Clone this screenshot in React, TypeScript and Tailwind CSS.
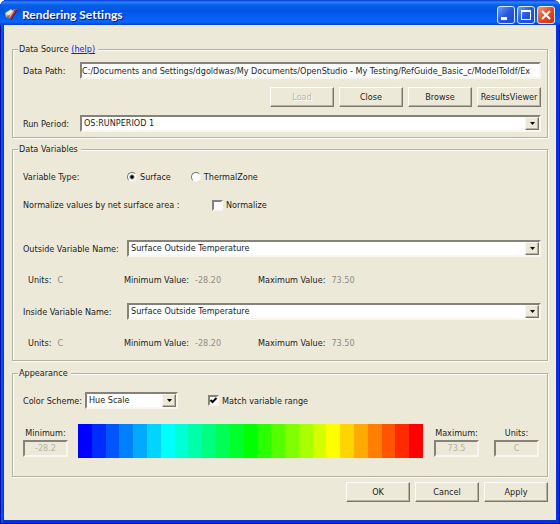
import type { ReactNode } from 'react';

const sunken =
  'border-2 border-t-[#85827a] border-l-[#85827a] border-r-[#f8f6ee] border-b-[#f8f6ee]';
const bands = Array.from({ length: 25 }, (_, i) => `hsl(${240 - i * 10} 100% 50%)`);

function Group({ title, className, children }: { title: ReactNode; className: string; children: ReactNode }) {
  return (
    <fieldset
      className={`min-w-0 border border-[#b5b2a5] pl-[10px] shadow-[1px_1px_0_#fffef8,inset_1px_1px_0_#fffef8] ${className}`}
    >
      <legend className="-ml-[5px] h-[14px] bg-[#ece9d8] px-px pr-[3px]">{title}</legend>
      {children}
    </fieldset>
  );
}

function PushButton({ children, disabled }: { children: ReactNode; disabled?: boolean }) {
  return (
    <button
      type="button"
      disabled={disabled}
      className="h-5 w-16 border border-t-[#fffef8] border-l-[#fffef8] border-r-[#79766b] border-b-[#79766b] bg-[#ece9d8] text-center leading-4 whitespace-nowrap shadow-[inset_-1px_-1px_0_#b5b2a3] disabled:text-[#b8b5a6] disabled:[text-shadow:1px_1px_0_#fff]"
    >
      {children}
    </button>
  );
}

function Dropdown({ id, value, className }: { id: string; value: string; className: string }) {
  return (
    <div className={`relative h-[17px] bg-white ${sunken} ${className}`}>
      <select id={id} className="block h-[13px] w-full appearance-none bg-white pl-[2px] leading-[13px] outline-none">
        <option>{value}</option>
      </select>
      <span className="pointer-events-none absolute top-0 right-0 flex h-[13px] w-[14px] items-center justify-center border border-t-[#f8f6ee] border-l-[#f8f6ee] border-r-[#79766b] border-b-[#79766b] bg-[#ece9d8] shadow-[inset_-1px_-1px_0_#b5b2a3]">
        <svg width="5" height="3" viewBox="0 0 5 3" aria-hidden="true">
          <path d="M0 0h5L2.500 3z" fill="#000" />
        </svg>
      </span>
    </div>
  );
}

function Radio({ label, checked }: { label: string; checked?: boolean }) {
  return (
    <label className="flex items-center gap-[3px]">
      <input
        type="radio"
        name="variable-type"
        defaultChecked={checked}
        className="size-[10px] appearance-none rounded-full border border-t-[#77746b] border-l-[#77746b] border-r-[#f4f2e8] border-b-[#f4f2e8] bg-white checked:bg-[radial-gradient(circle,#000_0_1px,#fff_3px)]"
      />
      {label}
    </label>
  );
}

function Check({ id, label, checked }: { id: string; label: string; checked?: boolean }) {
  return (
    <label htmlFor={id} className="flex items-center gap-[3px]">
      <span className="relative block size-[11px]">
        <input
          id={id}
          type="checkbox"
          defaultChecked={checked}
          className="peer block size-[11px] appearance-none border-2 border-t-[#85827a] border-l-[#85827a] border-r-[#f8f6ee] border-b-[#f8f6ee] bg-white"
        />
        <svg
          className="pointer-events-none absolute top-0 left-0 hidden peer-checked:block"
          width="11"
          height="11"
          viewBox="0 0 11 11"
          aria-hidden="true"
        >
          <path d="M2.500 5L4.500 7L8.500 3" fill="none" stroke="#000" strokeWidth="2" />
        </svg>
      </span>
      {label}
    </label>
  );
}

function Stats() {
  return (
    <dl className="flex h-[14px] pl-[5px] [&_dd]:text-[#8f8d84]">
      <div className="flex w-24 gap-[6px]">
        <dt>Units:</dt>
        <dd>C</dd>
      </div>
      <div className="flex w-[134px] gap-[6px]">
        <dt>Minimum Value:</dt>
        <dd>-28.20</dd>
      </div>
      <div className="flex gap-[6px]">
        <dt>Maximum Value:</dt>
        <dd>73.50</dd>
      </div>
    </dl>
  );
}

function RangeField({ id, label, value }: { id: string; label: string; value: string }) {
  return (
    <div className="flex w-[45px] flex-col items-center">
      <label htmlFor={id} className="h-[14px]">
        {label}
      </label>
      <input
        id={id}
        disabled
        defaultValue={value}
        className={`h-[17px] w-full bg-[#ece9d8] text-center leading-[13px] text-[#b5b2a4] ${sunken}`}
      />
    </div>
  );
}

export default function App() {
  return (
    <div className="bg-white font-['DejaVu_Sans_Condensed','DejaVu_Sans',sans-serif] text-[9px] leading-[14px] whitespace-nowrap text-[#1c1c1a]">
      <div className="flex min-h-screen flex-col rounded-t-[7px] bg-[#0831d9] shadow-[inset_1px_0_0_#0010b0,inset_-1px_-1px_0_#00138c,inset_3px_0_0_#0a50e8]">
        <header className="flex h-[25px] items-center rounded-t-[7px] bg-[linear-gradient(#0831d9_0%,#2b84f8_8%,#0560ea_20%,#0054e3_45%,#0560f5_75%,#0866ff_88%,#0040c8_100%)] pt-1 pr-[5px] pl-[5px]">
          <svg width="13" height="13" viewBox="0 0 13 13" aria-hidden="true">
            <path d="M0 5L6 1L10 4L5 10L1 9Z" fill="#cfc4b4" />
            <path d="M1 5L6 2L8 4L3 7Z" fill="#f4ede0" />
            <path d="M1 8L5 7L4 10Z" fill="#8e6650" />
            <path d="M11 0L12 1L5 12L4 11Z" fill="#d32f12" />
            <path d="M9 1L10 1L4 8Z" fill="#f1b14a" />
            <path d="M12 2L6 12" stroke="#551e25" />
          </svg>
          <h1 className="ml-1 flex-1 font-['Lato','Noto_Sans',sans-serif] text-[12px] leading-4 font-bold text-white [font-variant-ligatures:none] [text-shadow:1px_1px_0_#0a1883]">
            Rendering Settings
          </h1>
          <div className="flex gap-[2px]">
            <button type="button" aria-label="Minimize" className="size-[18px] rounded-[3px] border border-[#dce8ff] bg-[linear-gradient(135deg,#6e9cf8,#2458e0_50%,#1a4cd0)]">
              <svg width="16" height="16" viewBox="0 0 16 16"><path d="M3 10h6v3H3z" fill="#fff" /></svg>
            </button>
            <button type="button" aria-label="Maximize" className="size-[18px] rounded-[3px] border border-[#dce8ff] bg-[linear-gradient(135deg,#6e9cf8,#2458e0_50%,#1a4cd0)]">
              <svg width="16" height="16" viewBox="0 0 16 16"><path d="M3 3h10v10H3zM4 5v7h8V5z" fill="#fff" fillRule="evenodd" /></svg>
            </button>
            <button type="button" aria-label="Close window" className="size-[18px] rounded-[3px] border border-[#ffe8e0] bg-[linear-gradient(135deg,#f09a7c,#e0492a_50%,#c8350e)]">
              <svg width="16" height="16" viewBox="0 0 16 16"><path d="M4 4l8 8M12 4l-8 8" stroke="#fff" strokeWidth="2" /></svg>
            </button>
          </div>
        </header>

        <main className="mx-1 mb-1 flex-1 bg-[#ece9d8] px-2 pt-[17px] pb-4">
          <Group
            className="pr-[6px] pb-[5px]"
            title={
              <>
                Data Source{' '}
                <a href="#help" className="text-[#1a1ae0] underline">
                  (help)
                </a>
              </>
            }
          >
            <div className="mt-[6px] flex items-center">
              <label htmlFor="path" className="w-[57px]">
                Data Path:
              </label>
              <input
                id="path"
                defaultValue="C:/Documents and Settings/dgoldwas/My Documents/OpenStudio - My Testing/RefGuide_Basic_c/ModelToIdf/Ex"
                className={`h-[17px] min-w-0 flex-1 bg-white leading-[13px] outline-none ${sunken}`}
              />
            </div>
            <div className="mt-2 flex justify-end gap-[5px]">
              <PushButton disabled>Load</PushButton>
              <PushButton>Close</PushButton>
              <PushButton>Browse</PushButton>
              <PushButton>ResultsViewer</PushButton>
            </div>
            <div className="mt-2 flex items-center">
              <label htmlFor="period" className="w-[57px]">
                Run Period:
              </label>
              <Dropdown id="period" value="OS:RUNPERIOD 1" className="flex-1" />
            </div>
          </Group>

          <Group className="mt-[4px] pr-[6px] pb-[10px]" title="Data Variables">
            <div className="mt-[14px] flex h-[14px] items-center">
              <span className="w-[104px]">Variable Type:</span>
              <div className="flex gap-5">
                <Radio label="Surface" checked />
                <Radio label="ThermalZone" />
              </div>
            </div>
            <div className="mt-[14px] flex h-[14px] items-center">
              <span className="w-[189px]">Normalize values by net surface area :</span>
              <Check id="normalize" label="Normalize" />
            </div>
            <div className="mt-[28px] flex items-center">
              <label htmlFor="outside" className="w-[104px]">
                Outside Variable Name:
              </label>
              <Dropdown id="outside" value="Surface Outside Temperature" className="flex-1" />
            </div>
            <div className="mt-4">
              <Stats />
            </div>
            <div className="mt-4 flex items-center">
              <label htmlFor="inside" className="w-[104px]">
                Inside Variable Name:
              </label>
              <Dropdown id="inside" value="Surface Outside Temperature" className="flex-1" />
            </div>
            <div className="mt-4">
              <Stats />
            </div>
          </Group>

          <Group className="mt-[5px] pr-[8px] pb-[18px]" title="Appearance">
            <div className="mt-3 flex items-center">
              <label htmlFor="scheme" className="w-[62px]">
                Color Scheme:
              </label>
              <Dropdown id="scheme" value="Hue Scale" className="mr-[30px] w-[93px]" />
              <Check id="match" label="Match variable range" checked />
            </div>
            <div className="mt-[15px] flex items-center">
              <RangeField id="min" label="Minimum:" value="-28.2" />
              <div className="mr-[11px] ml-[10px] flex h-[34px] flex-1">
                {bands.map((color) => (
                  <div key={color} className="flex-1" style={{ backgroundColor: color }} />
                ))}
              </div>
              <div className="flex gap-[15px]">
                <RangeField id="max" label="Maximum:" value="73.5" />
                <RangeField id="units" label="Units:" value="C" />
              </div>
            </div>
          </Group>

          <div className="mt-[5px] flex justify-end gap-[5px]">
            <PushButton>OK</PushButton>
            <PushButton>Cancel</PushButton>
            <PushButton>Apply</PushButton>
          </div>
        </main>
      </div>
    </div>
  );
}
